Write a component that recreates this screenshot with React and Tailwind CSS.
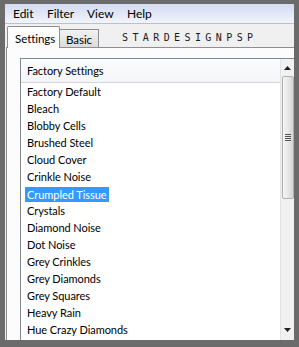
import React from "react";

const items = [
  "Factory Default",
  "Bleach",
  "Blobby Cells",
  "Brushed Steel",
  "Cloud Cover",
  "Crinkle Noise",
  "Crumpled Tissue",
  "Crystals",
  "Diamond Noise",
  "Dot Noise",
  "Grey Crinkles",
  "Grey Diamonds",
  "Grey Squares",
  "Heavy Rain",
  "Hue Crazy Diamonds",
];

export default function App() {
  const font = { fontFamily: "Lato, 'Liberation Sans', sans-serif" };
  return (
    <div
      className="w-[299px] h-[347px] bg-[#6b6b6b] pt-[4px] pl-[5px] pr-[5px] overflow-hidden text-black text-[11px] tracking-[-0.05px]"
      style={font}
    >
      <div className="h-[336px] bg-[#f0f0f0] flex flex-col overflow-hidden">
        {/* menu bar */}
        <div className="h-[20px] shrink-0 flex items-center bg-gradient-to-b from-[#d3dbf0] to-[#f1f4fb] border-b border-[#b9c0d0] text-[12px] pl-[8px]">
          <span className="w-[34px]">Edit</span>
          <span className="w-[40px]">Filter</span>
          <span className="w-[40px]">View</span>
          <span>Help</span>
        </div>
        {/* tab strip */}
        <div className="h-[23px] shrink-0 flex items-end pl-[2px] relative">
          <div className="h-[22px] w-[53px] bg-[#fcfcfc] border border-b-0 border-[#8c8e94] rounded-t-[2px] flex items-start pt-[3px] pl-[7px] relative z-10 -mb-[1px] text-[11.5px]">
            Settings
          </div>
          <div className="h-[18px] w-[39px] bg-gradient-to-b from-[#f2f2f2] to-[#dcdcdc] border border-b-0 border-l-0 border-[#8c8e94] flex items-start pt-[1px] pl-[6px] text-[11.5px]">
            Basic
          </div>
          <div
            className="ml-[23px] self-center mt-[4px] text-[10px] tracking-[4.4px] text-[#1a1a1a]"
            style={{ fontFamily: "'DejaVu Sans Mono', monospace" }}
          >
            STARDESIGNPSP
          </div>
        </div>
        {/* panel */}
        <div className="flex-1 ml-[1px] bg-[#fcfcfc] border-t border-l border-[#8c8e94] pl-[13px] pt-[10px] flex flex-col overflow-hidden">
          <div className="flex-1 bg-white border-t border-l border-[#828790] flex overflow-hidden">
            <div className="flex-1 flex flex-col">
              <div className="h-[24px] shrink-0 bg-gradient-to-b from-[#fbfcfd] to-[#f3f5f8] border-b border-[#d5d5d5] flex items-center pl-[6px] pt-[2px]">
                Factory Settings
              </div>
              {items.map((it) => (
                <div key={it} className="h-[17px] shrink-0 flex items-center pl-[4px] pt-[1px]">
                  {it === "Crumpled Tissue" ? (
                    <span className="h-[15px] leading-[15px] px-[2px] bg-[#3399ff] text-white">{it}</span>
                  ) : (
                    <span className="px-[2px]">{it}</span>
                  )}
                </div>
              ))}
            </div>
            {/* scrollbar */}
            <div className="w-[14px] shrink-0 bg-[#f1f1f1] border-l border-[#e3e3e3] flex flex-col items-center">
              <div className="h-[17px] w-full flex items-center justify-center">
                <svg width="7" height="4" viewBox="0 0 7 4">
                  <path d="M3.5 0 L7 4 L0 4 Z" fill="#202020" />
                </svg>
              </div>
              <div className="w-[12px] h-[123px] rounded-[2px] border border-[#b0b0b0] bg-gradient-to-r from-[#f5f5f5] via-[#e8e8e8] to-[#d3d3d3] flex flex-col items-center justify-center gap-[1px]">
                <div className="w-[6px] h-[1px] bg-[#555]" />
                <div className="w-[6px] h-[1px] bg-[#555]" />
                <div className="w-[6px] h-[1px] bg-[#555]" />
                <div className="w-[6px] h-[1px] bg-[#555]" />
              </div>
              <div className="flex-1" />
              <div className="h-[17px] w-full flex items-center justify-center mb-[2px]">
                <svg width="7" height="4" viewBox="0 0 7 4">
                  <path d="M0 0 L7 0 L3.5 4 Z" fill="#202020" />
                </svg>
              </div>
            </div>
          </div>
        </div>
      </div>
    </div>
  );
}
